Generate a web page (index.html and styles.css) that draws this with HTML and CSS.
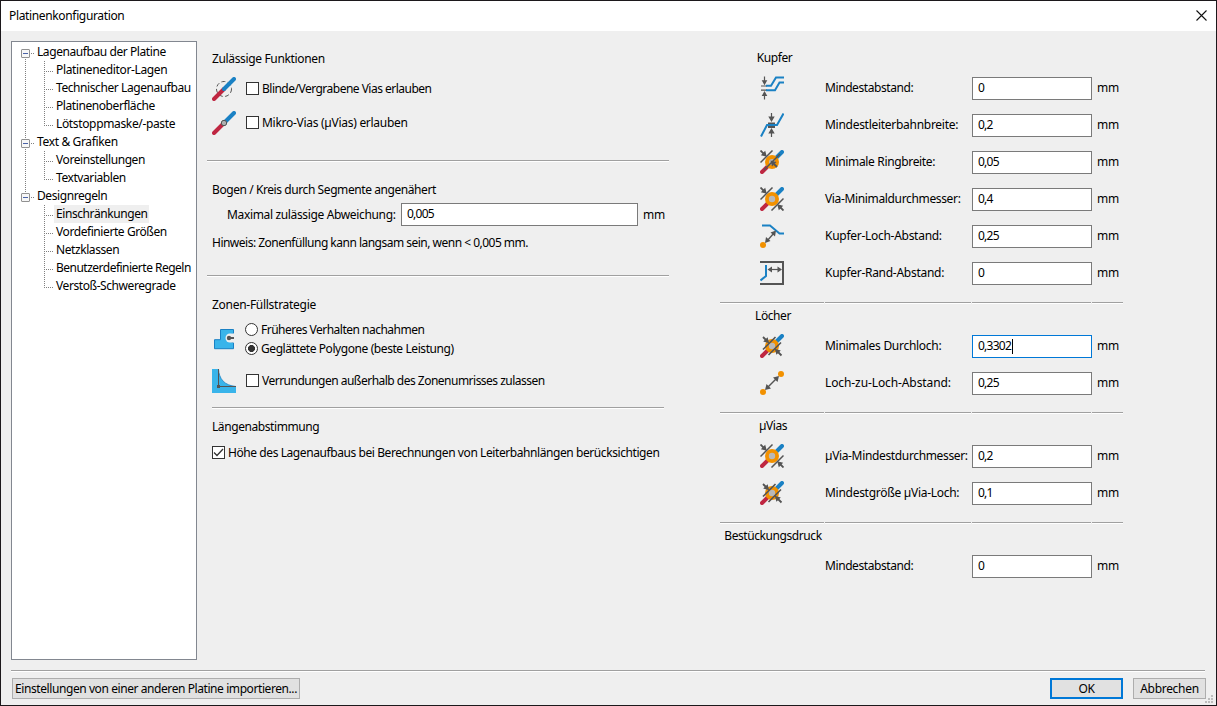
FILE: index.html
```html
<!DOCTYPE html>
<html lang="de">
<head>
<meta charset="utf-8">
<title>Platinenkonfiguration</title>
<link rel="stylesheet" href="styles.css">
</head>
<body>
<svg class="defs" width="0" height="0">
  <defs>
    <g id="track">
      <path d="M2 22 12 12" stroke="#bf2641" stroke-width="4" stroke-linecap="round"/>
      <path d="M12 12 22 2" stroke="#1a81c4" stroke-width="4" stroke-linecap="round"/>
    </g>
    <g id="via-size">
      <use href="#track"/>
      <circle cx="12" cy="12" r="7" fill="#f29100"/>
      <circle cx="12" cy="12" r="3.2" fill="#b9b9b9"/>
      <path d="M0.5 12.5 12.5 0.5M11.5 23.5 23.5 11.5" stroke="#545454" stroke-width="1.5"/>
      <path d="M0.5 0.5 4 4M23.5 23.5 20 20" stroke="#545454" stroke-width="1.8"/>
      <path d="M6.8 6.8 .8 5.200 5.200 .8zM17.200 17.200 23.200 18.800 18.800 23.200z" fill="#545454"/>
    </g>
    <g id="via-hole">
      <use href="#track"/>
      <circle cx="12" cy="12" r="7" fill="#f29100"/>
      <circle cx="12" cy="12" r="3.2" fill="#b9b9b9"/>
      <path d="M3 15.500 15.500 3M8.500 21 21 8.500" stroke="#545454" stroke-width="1.600"/>
      <path d="M3 3 6 6M21.500 21.500 18 18" stroke="#545454" stroke-width="1.800"/>
      <path d="M9.200 9.200 3.200 7.600 7.600 3.200zM14.800 14.800 20.800 16.400 16.400 20.800z" fill="#545454"/>
    </g>
  </defs>
</svg>
<div class="window">
  <header class="titlebar">
    <span>Platinenkonfiguration</span>
    <svg class="close" width="11" height="11" viewBox="0 0 11 11"><path d="M.5.5l10 10M10.500.5l-10 10" stroke="#111" stroke-width="1.100"/></svg>
  </header>

  <main class="content">
    <nav class="tree">
      <div class="branch">
        <div class="node"><i class="toggle"></i>Lagenaufbau der Platine</div>
        <ul class="leaves">
          <li><span class="normal">Platineneditor-Lagen</span></li>
          <li><span>Technischer Lagenaufbau</span></li>
          <li><span>Platinenoberfläche</span></li>
          <li><span class="normal">Lötstoppmaske/-paste</span></li>
        </ul>
      </div>
      <div class="branch">
        <div class="node normal"><i class="toggle"></i>Text &amp; Grafiken</div>
        <ul class="leaves">
          <li><span>Voreinstellungen</span></li>
          <li><span>Textvariablen</span></li>
        </ul>
      </div>
      <div class="branch last">
        <div class="node"><i class="toggle"></i>Designregeln</div>
        <ul class="leaves">
          <li><span class="selected">Einschränkungen</span></li>
          <li><span>Vordefinierte Größen</span></li>
          <li><span>Netzklassen</span></li>
          <li><span class="tight">Benutzerdefinierte Regeln</span></li>
          <li><span>Verstoß-Schweregrade</span></li>
        </ul>
      </div>
    </nav>

    <div class="general">
      <section class="features">
        <h2 class="normal">Zulässige Funktionen</h2>
        <label class="option">
          <svg class="icon" viewBox="0 0 24 24" fill="none"><circle cx="12" cy="12" r="7.500" stroke="#545454" stroke-width="1" stroke-dasharray="4 2.500"/><use href="#track"/></svg>
          <i class="check"></i><span class="tight">Blinde/Vergrabene Vias erlauben</span>
        </label>
        <label class="option">
          <svg class="icon" viewBox="0 0 24 24" fill="none"><use href="#track"/><circle cx="12" cy="12" r="2.700" fill="#b0b0b0" stroke="#545454"/></svg>
          <i class="check"></i><span class="wide">Mikro-Vias (µVias) erlauben</span>
        </label>
      </section>
      <hr class="rule">
      <section class="arcs">
        <h2>Bogen / Kreis durch Segmente angenähert</h2>
        <div class="field"><span class="name normal">Maximal zulässige Abweichung:</span><span class="input">0,005</span><span class="unit">mm</span></div>
        <p class="hint tight">Hinweis: Zonenfüllung kann langsam sein, wenn &lt; 0,005 mm.</p>
      </section>
      <hr class="rule">
      <section class="zones">
        <h2 class="wide">Zonen-Füllstrategie</h2>
        <div class="strategy">
          <svg class="icon" viewBox="0 0 24 24" fill="none"><path d="M8.500 2.500h13v4.200a4.500 4.500 0 1 0 0 9v6h-19v-9h6z" fill="#39b4ea" stroke="#1a81c4"/><path d="M22 6.500h-4a4.500 4.500 0 0 0 0 9h4z" fill="#efefef"/><path d="M16 11h6" stroke="#545454" stroke-width="2"/><circle cx="17" cy="11" r="2.200" fill="#545454"/></svg>
          <div class="radios">
            <label><i class="radio"></i><span class="tight">Früheres Verhalten nachahmen</span></label>
            <label><i class="radio on"></i><span>Geglättete Polygone (beste Leistung)</span></label>
          </div>
        </div>
        <label class="option">
          <svg class="icon" viewBox="0 0 24 24" fill="none"><path d="M0 0h6.500c.5 10 6 16.500 17.500 17.500V24H0z" fill="#39b4ea"/><path d="M6.500 0c.5 10 6 16.500 17.500 17.500" stroke="#1a81c4" stroke-width=".8"/><path d="M6.500 0v17.500H24" stroke="#545454"/><path d="M5 16h3v3H5z" fill="#545454"/></svg>
          <i class="check"></i><span class="tight">Verrundungen außerhalb des Zonenumrisses zulassen</span>
        </label>
      </section>
      <hr class="rule inset">
      <section class="tuning">
        <h2>Längenabstimmung</h2>
        <label class="option">
          <i class="check"><svg width="11" height="11" viewBox="0 0 11 11" fill="none"><path d="M1 5.500 4 8.500 10 2" stroke="#333" stroke-width="1.300"/></svg></i><span>Höhe des Lagenaufbaus bei Berechnungen von Leiterbahnlängen berücksichtigen</span>
        </label>
      </section>
    </div>

    <div class="limits">
      <section>
        <h2 class="kupfer">Kupfer</h2>
        <div class="limit">
          <svg class="icon" viewBox="0 0 24 24" fill="none"><path d="M1 10h6M1 14.200h6" stroke="#545454" stroke-width="1.200"/><path d="M6 9.700h5L16 1.500h8M6 14.300h9L19.500 6.500H24" stroke="#1a81c4" stroke-width="2"/><path d="M4.500 .5v5M4.500 23.500v-5" stroke="#545454" stroke-width="1.200"/><path d="M4.500 9.200 1.700 4.200h5.600zM4.500 15 1.700 20h5.600z" fill="#545454"/></svg>
          <span class="name">Mindestabstand:</span><span class="input">0</span><span class="unit">mm</span>
        </div>
        <div class="limit">
          <svg class="icon" viewBox="0 0 24 24" fill="none"><path d="M8 9.500h7v5.500H8z" fill="#545454"/><path d="M1 23.500 7 12h10L23.500.5" stroke="#1a81c4" stroke-width="2"/><path d="M11.500 0v5M11.500 24v-5" stroke="#545454" stroke-width="1.200"/><path d="M11.500 9 8.300 3.500h6.400zM11.500 15 8.300 20.500h6.400z" fill="#545454"/></svg>
          <span class="name wide">Mindestleiterbahnbreite:</span><span class="input">0,2</span><span class="unit">mm</span>
        </div>
        <div class="limit">
          <svg class="icon" viewBox="0 0 24 24" fill="none"><use href="#track"/><circle cx="12" cy="12" r="7" fill="#f29100"/><circle cx="12" cy="12" r="3" fill="#b9b9b9"/><path d="M.5 12.500 12.500.5M4 20 20 4" stroke="#545454" stroke-width="1.500"/><path d="M.5.5 4 4M17 17l-3-3" stroke="#545454" stroke-width="1.800"/><path d="M6.800 6.800 .8 5.200 5.200 .8zM10.500 10.500 16.500 12 12 16.500z" fill="#545454"/></svg>
          <span class="name normal">Minimale Ringbreite:</span><span class="input">0,05</span><span class="unit">mm</span>
        </div>
        <div class="limit">
          <svg class="icon" viewBox="0 0 24 24" fill="none"><use href="#via-size"/></svg>
          <span class="name normal">Via-Minimaldurchmesser:</span><span class="input">0,4</span><span class="unit">mm</span>
        </div>
        <div class="limit">
          <svg class="icon" viewBox="0 0 24 24" fill="none"><path d="M2 1.500h8L19.500 9.500H24" stroke="#1a81c4" stroke-width="1.900"/><circle cx="3" cy="21" r="3" fill="#f29100"/><path d="M7 17l7-8" stroke="#545454" stroke-width="1.400"/><path d="M16 6.500 15 12.500 10.500 8.500zM5 19l1-6 4.500 4z" fill="#545454"/></svg>
          <span class="name wide">Kupfer-Loch-Abstand:</span><span class="input">0,25</span><span class="unit">mm</span>
        </div>
        <div class="limit">
          <svg class="icon" viewBox="0 0 24 24" fill="none"><path d="M0 1h23v22H0" stroke="#545454" stroke-width="2"/><path d="M.5 19.500 6 15V4" stroke="#1a81c4" stroke-width="2"/><path d="M10 8.500h10" stroke="#545454" stroke-width="1.200"/><path d="M7.500 8.500 12 5.500v6zM22 8.500 17.500 5.500v6z" fill="#545454"/></svg>
          <span class="name wide">Kupfer-Rand-Abstand:</span><span class="input">0</span><span class="unit">mm</span>
        </div>
      </section>
      <div class="divider"><i></i><i></i><i></i><i></i></div>
      <section>
        <h2>Löcher</h2>
        <div class="limit">
          <svg class="icon" viewBox="0 0 24 24" fill="none"><use href="#via-hole"/></svg>
          <span class="name wide">Minimales Durchloch:</span><span class="input focus">0,3302<i class="caret"></i></span><span class="unit">mm</span>
        </div>
        <div class="limit">
          <svg class="icon" viewBox="0 0 24 24" fill="none"><circle cx="3" cy="21" r="3" fill="#f29100"/><circle cx="21" cy="3" r="3" fill="#f29100"/><path d="M7 17 17 7" stroke="#545454" stroke-width="1.400"/><path d="M19 5l-1.500 6-4.500-4.500zM5 19l1.500-6 4.500 4.500z" fill="#545454"/></svg>
          <span class="name wider">Loch-zu-Loch-Abstand:</span><span class="input">0,25</span><span class="unit">mm</span>
        </div>
      </section>
      <div class="divider"><i></i><i></i><i></i><i></i></div>
      <section>
        <h2>µVias</h2>
        <div class="limit">
          <svg class="icon" viewBox="0 0 24 24" fill="none"><use href="#via-size"/></svg>
          <span class="name normal">µVia-Mindestdurchmesser:</span><span class="input">0,2</span><span class="unit">mm</span>
        </div>
        <div class="limit">
          <svg class="icon" viewBox="0 0 24 24" fill="none"><use href="#via-hole"/></svg>
          <span class="name wide">Mindestgröße µVia-Loch:</span><span class="input">0,1</span><span class="unit">mm</span>
        </div>
      </section>
      <div class="divider"><i></i><i></i><i></i><i></i></div>
      <section>
        <h2>Bestückungsdruck</h2>
        <div class="limit">
          <span class="icon"></span>
          <span class="name">Mindestabstand:</span><span class="input">0</span><span class="unit">mm</span>
        </div>
      </section>
    </div>
  </main>

  <footer class="actions">
    <button class="import">Einstellungen von einer anderen Platine importieren...</button>
    <button class="ok">OK</button>
    <button class="cancel">Abbrechen</button>
    <svg class="grip" width="9" height="9" viewBox="0 0 9 9"><path d="M6 0h2v2H6zM3 3h2v2H3zM6 3h2v2H6zM0 6h2v2H0zM3 6h2v2H3zM6 6h2v2H6z" fill="#bdbdbd"/></svg>
  </footer>
</div>
</body>
</html>
```

FILE: styles.css
```css
* { box-sizing: border-box; }
body {
  margin: 0;
  font: 12px/20px "Noto Sans", "Open Sans", sans-serif;
  letter-spacing: -0.42px;
  color: #000;
  white-space: nowrap;
}
.defs { display: block; height: 0; }
h2, p, ul { margin: 0; padding: 0; font-size: inherit; font-weight: 400; list-style: none; }
i { display: block; }

/* Tracking steps */
.tight { letter-spacing: -0.51px; }
.normal, .titlebar { letter-spacing: -0.35px; }
.wide { letter-spacing: -0.28px; }
.wider { letter-spacing: -0.1px; }

.window {
  width: 1217px;
  height: 706px;
  border: 1px solid #1c181b;
  background: #efefef;
  display: flex;
  flex-direction: column;
  overflow: hidden;
}
.titlebar {
  height: 30px;
  padding: 0 9px 0 8px;
  background: #fff;
  display: flex;
  align-items: center;
  justify-content: space-between;
}
.close { margin-top: -1px; }

.content { display: flex; height: 639px; padding: 10px 10px 10px; }

/* Navigation tree */
.tree {
  width: 186px;
  height: 619px;
  flex: none;
  border: 1px solid #828790;
  background: #fff;
  padding: 1px 0 0 9px;
  line-height: 18px;
}
.branch {
  background: repeating-linear-gradient(#808080 0 1px, transparent 1px 2px) 4px 0 / 1px 100% no-repeat;
}
.branch:first-child { background-position: 4px 10px; }
.branch.last { background-size: 1px 8px; }
.node {
  display: flex;
  align-items: center;
  height: 18px;
  background: repeating-linear-gradient(90deg, #808080 0 1px, transparent 1px 2px) 10px 10px / 3px 1px no-repeat;
}
.toggle {
  width: 9px;
  height: 9px;
  margin: 3px 7px 0 0;
  border: 1px solid #919191;
  border-radius: 1px;
  background: linear-gradient(#4b63a7, #4b63a7) center / 5px 1px no-repeat, #f7f7f7;
}
.leaves li {
  height: 18px;
  padding-left: 33px;
  background:
    repeating-linear-gradient(#808080 0 1px, transparent 1px 2px) 23px 0 / 1px 18px no-repeat,
    repeating-linear-gradient(90deg, #808080 0 1px, transparent 1px 2px) 23px 10px / 9px 1px no-repeat;
}
.leaves li:last-child { background-size: 1px 10px, 9px 1px; }
.leaves span { display: inline-block; height: 18px; padding: 0 2px; vertical-align: top; }
.selected { background: #efefef; }

/* General options */
.general { width: 462px; flex: none; margin-left: 10px; padding-top: 8px; }
.general section { padding-left: 5px; }
.general h2 { height: 20px; }
.rule { height: 2px; margin: 0; border: 0; border-top: 1px solid #a0a0a0; background: #fff; }
.rule.inset { margin: 0 5px; }
.icon { width: 24px; height: 24px; flex: none; display: block; }
.option { display: flex; height: 24px; align-items: center; }
.option .icon + .check { margin-left: 10px; }
.check { width: 13px; height: 13px; margin: -1px 3px 0 0; border: 1px solid #333; background: #fff; flex: none; }
.check svg { display: block; }
.features { padding-bottom: 25px; }
.features .option { margin-top: 8px; }
.features .option + .option { margin-top: 10px; }
.arcs { padding: 18px 0 22px; }
.field { display: flex; align-items: center; margin-top: 3px; padding-left: 15px; }
.field .name { width: 174px; }
.field .input { width: 237px; }
.hint { margin-top: 7px; }
.zones { padding: 18px 0 14px; }
.strategy { display: flex; align-items: center; margin-top: 5px; height: 38px; }
.radios { margin-left: 9px; line-height: 19px; }
.radios label { display: flex; height: 19px; align-items: center; }
.radio { width: 13px; height: 13px; margin: 0 3px 0 0; border: 1px solid #333; border-radius: 50%; background: #fff; }
.radio.on { background: radial-gradient(circle, #333 0 3.2px, #fff 3.8px); }
.zones .option { margin-top: 11px; }
.tuning { padding-top: 8px; }
.tuning .option { margin-top: 4px; }

/* Numeric limits */
.input {
  display: flex;
  align-items: center;
  height: 23px;
  padding: 0 5px 2px;
  border: 1px solid #7a7a7a;
  background: #fff;
  letter-spacing: -0.75px;
}
.input.focus { border-color: #0078d7; }
.caret { width: 1px; height: 15px; margin: 1px 0 0 1px; background: #000; }
.unit { padding-left: 5px; letter-spacing: -0.3px; }
.limits { width: 403px; flex: none; margin-left: 51px; padding-top: 7px; }
.limits h2 { width: 106px; height: 20px; margin-bottom: 2px; text-align: center; }
.limits .kupfer { padding-left: 3px; }
.limit, .divider { display: grid; grid-template-columns: 104px 146px 119px 31px; column-gap: 1px; }
.limit { height: 37px; padding-top: 7px; line-height: 21px; }
.limit .icon { margin: -1px 0 0 40px; }
.limit .input { width: 120px; }
.divider { margin: 10px 0 2px; }
.divider i { height: 2px; background: #fff; border-top: 1px solid #a0a0a0; }

/* Bottom bar */
.actions { display: flex; height: 35px; margin: 0 0 0 10px; padding: 8px 0 0 1px; background: linear-gradient(#a0a0a0 0 1px, #fff 1px 2px) 0 0 / 1194px 2px no-repeat; }
button {
  height: 21px;
  padding: 0;
  border: 1px solid #adadad;
  background: #e1e1e1;
  font: inherit;
  letter-spacing: inherit;
  line-height: 18px;
  color: #000;
}
.import { width: 288px; }
.ok { width: 73px; margin-left: 750px; border: 2px solid #0078d7; line-height: 16px; }
.cancel { width: 73px; margin-left: 10px; letter-spacing: -0.3px; }
.grip { margin: 17px 0 0 -1px; }
```
